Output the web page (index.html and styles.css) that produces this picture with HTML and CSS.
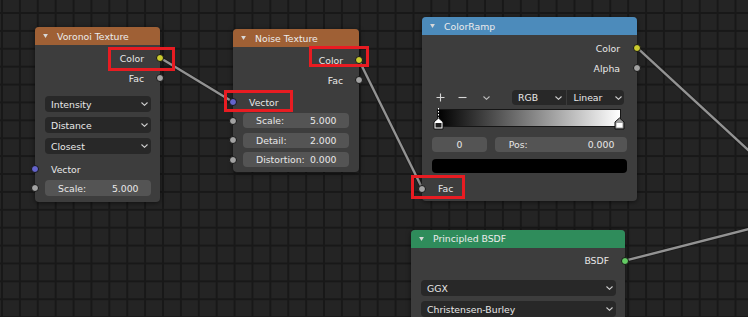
FILE: index.html
```html
<!DOCTYPE html>
<html>
<head>
<meta charset="utf-8">
<link rel="stylesheet" href="styles.css">
</head>
<body>
<div class="editor">
  <svg class="links" width="748" height="317" viewBox="0 0 748 317">
    <g class="wire-shadow">
      <line x1="160" y1="57.7" x2="233" y2="102"/>
      <line x1="359" y1="60.3" x2="422" y2="187.7"/>
      <line x1="637" y1="47.7" x2="760" y2="161"/>
      <line x1="625" y1="260.7" x2="760" y2="226.3"/>
    </g>
    <g class="wire">
      <line x1="160" y1="57.7" x2="233" y2="102"/>
      <line x1="359" y1="60.3" x2="422" y2="187.7"/>
      <line x1="637" y1="47.7" x2="760" y2="161"/>
      <line x1="625" y1="260.7" x2="760" y2="226.3"/>
    </g>
  </svg>

  <!-- Voronoi Texture -->
  <div class="node node-voronoi">
    <div class="node-header hdr-texture"><svg class="tri" viewBox="0 0 6 5"><polygon points="0,0 6,0 3,5"/></svg>Voronoi Texture</div>
    <div class="node-body body-voronoi">
      <div class="row row-out"><span>Color</span><i class="sock sock-right sock-yellow"></i></div>
      <div class="row row-out"><span>Fac</span><i class="sock sock-right sock-grey"></i></div>
      <div class="dropdown dd-first"><span>Intensity</span><svg class="chev" viewBox="0 0 7 4"><polyline points="0.5,0.5 3.5,3.3 6.5,0.5"/></svg></div>
      <div class="dropdown dd-next"><span>Distance</span><svg class="chev" viewBox="0 0 7 4"><polyline points="0.5,0.5 3.5,3.3 6.5,0.5"/></svg></div>
      <div class="dropdown dd-next"><span>Closest</span><svg class="chev" viewBox="0 0 7 4"><polyline points="0.5,0.5 3.5,3.3 6.5,0.5"/></svg></div>
      <div class="row row-in vor-vector"><i class="sock sock-left sock-blue"></i><span>Vector</span></div>
      <div class="field field-vor-scale"><i class="sock sock-left-field sock-grey"></i><span>Scale:</span><span>5.000</span></div>
    </div>
  </div>

  <!-- Noise Texture -->
  <div class="node node-noise">
    <div class="node-header hdr-texture"><svg class="tri" viewBox="0 0 6 5"><polygon points="0,0 6,0 3,5"/></svg>Noise Texture</div>
    <div class="node-body body-noise">
      <div class="row row-out"><span>Color</span><i class="sock sock-right sock-yellow"></i></div>
      <div class="row row-out"><span>Fac</span><i class="sock sock-right sock-grey"></i></div>
      <div class="row row-in noise-vector"><i class="sock sock-left sock-blue"></i><span>Vector</span></div>
      <div class="field field-noise first"><i class="sock sock-left-field sock-grey"></i><span>Scale:</span><span>5.000</span></div>
      <div class="field field-noise"><i class="sock sock-left-field sock-grey"></i><span>Detail:</span><span>2.000</span></div>
      <div class="field field-noise"><i class="sock sock-left-field sock-grey"></i><span>Distortion:</span><span>0.000</span></div>
    </div>
  </div>

  <!-- ColorRamp -->
  <div class="node node-ramp">
    <div class="node-header hdr-converter"><svg class="tri" viewBox="0 0 6 5"><polygon points="0,0 6,0 3,5"/></svg>ColorRamp</div>
    <div class="node-body body-ramp">
      <div class="row row-out ramp-out"><span>Color</span><i class="sock sock-right sock-yellow"></i></div>
      <div class="row row-out ramp-out"><span>Alpha</span><i class="sock sock-right sock-grey"></i></div>
      <div class="ramp-tools">
        <svg class="tool tool-plus" viewBox="0 0 9 9"><path d="M4.5 0.5V8.5M0.5 4.5H8.5"/></svg>
        <svg class="tool tool-minus" viewBox="0 0 9 9"><path d="M0.5 4.5H8.5"/></svg>
        <svg class="tool tool-chev" viewBox="0 0 7 4"><polyline points="0.5,0.5 3.5,3.3 6.5,0.5"/></svg>
        <div class="split-dd">
          <div class="split-part part-rgb"><span>RGB</span><svg class="chev" viewBox="0 0 7 4"><polyline points="0.5,0.5 3.5,3.3 6.5,0.5"/></svg></div>
          <div class="split-part part-linear"><span>Linear</span><svg class="chev" viewBox="0 0 7 4"><polyline points="0.5,0.5 3.5,3.3 6.5,0.5"/></svg></div>
        </div>
      </div>
      <div class="ramp-bar">
        <div class="ramp-grad"></div>
        <svg class="stop stop-left" viewBox="0 0 11 13"><path class="stop-dash" d="M5.5 -9V2"/><path class="stop-shape" d="M1 5L5.5 1L10 5V12H1Z"/><rect class="stop-fill-dark" x="2.5" y="6" width="6" height="4.5"/></svg>
        <svg class="stop stop-right" viewBox="0 0 11 13"><path class="stop-shape-r" d="M1 5L5.5 1L10 5V12H1Z"/><rect class="stop-fill-light" x="2.5" y="6" width="6" height="4.5"/></svg>
      </div>
      <div class="ramp-fields">
        <div class="field field-index"><span>0</span></div>
        <div class="field field-pos"><span>Pos:</span><span>0.000</span></div>
      </div>
      <div class="ramp-color"></div>
      <div class="row row-in ramp-fac"><i class="sock sock-left sock-grey"></i><span>Fac</span></div>
    </div>
  </div>

  <!-- Principled BSDF -->
  <div class="node node-bsdf">
    <div class="node-header hdr-shader"><svg class="tri" viewBox="0 0 6 5"><polygon points="0,0 6,0 3,5"/></svg>Principled BSDF</div>
    <div class="node-body body-bsdf">
      <div class="row row-out"><span>BSDF</span><i class="sock sock-right sock-green"></i></div>
      <div class="dropdown dd-bsdf-first"><span>GGX</span><svg class="chev" viewBox="0 0 7 4"><polyline points="0.5,0.5 3.5,3.3 6.5,0.5"/></svg></div>
      <div class="dropdown dd-next"><span>Christensen-Burley</span><svg class="chev" viewBox="0 0 7 4"><polyline points="0.5,0.5 3.5,3.3 6.5,0.5"/></svg></div>
    </div>
  </div>

  <!-- highlight boxes -->
  <div class="mark mark-vor-color"></div>
  <div class="mark mark-noise-color"></div>
  <div class="mark mark-noise-vector"></div>
  <div class="mark mark-ramp-fac"></div>
</div>
</body>
</html>
```

FILE: styles.css
```css
* { box-sizing: border-box; }

html, body {
  margin: 0;
  padding: 0;
  background: #232323;
}

.editor {
  position: relative;
  width: 748px;
  height: 317px;
  overflow: hidden;
  background-color: #242424;
  background-image:
    linear-gradient(to right, #181818 0, #181818 1.5px, transparent 1.5px),
    linear-gradient(to bottom, #181818 0, #181818 1.5px, transparent 1.5px);
  background-size: 17.9px 17.9px;
  background-position: 1px 12px;
  font-family: "DejaVu Sans", "Liberation Sans", sans-serif;
  font-size: 9.3px;
  color: #e8e8e8;
}

/* links */
.links {
  position: absolute;
  left: 0;
  top: 0;
}
.wire-shadow line {
  stroke: #151515;
  stroke-width: 4.2;
  stroke-opacity: 0.55;
}
.wire line {
  stroke: #939393;
  stroke-width: 2.4;
}

/* nodes */
.node {
  position: absolute;
  background: #3d3d3d;
  border-radius: 4px;
  box-shadow: 0 1px 5px rgba(0, 0, 0, 0.55);
}
.node-voronoi { left: 35px; top: 27px; width: 125px; }
.node-noise   { left: 233px; top: 29px; width: 126px; }
.node-ramp    { left: 422px; top: 17px; width: 215px; }
.node-bsdf    { left: 411px; top: 230px; width: 214px; height: 130px; }

.node-header {
  height: 18px;
  border-radius: 4px 4px 0 0;
  display: flex;
  align-items: center;
  padding-left: 22px;
  position: relative;
  color: #ececec;
  white-space: nowrap;
}
.hdr-texture   { background: #9f6035; }
.hdr-converter { background: #4c8bbb; }
.hdr-shader    { background: #2f8c5b; height: 17.5px; }

.tri {
  position: absolute;
  left: 8px;
  top: 7px;
  width: 5px;
  height: 4px;
  fill: #d8d8d8;
}

.node-body {
  display: flex;
  flex-direction: column;
  padding-top: 3px;
}
.body-voronoi { padding-bottom: 6px; }
.body-noise   { padding-bottom: 5px; }
.body-ramp    { padding-bottom: 2px; }

/* socket rows */
.row {
  position: relative;
  height: 20px;
  display: flex;
  align-items: center;
  white-space: nowrap;
}
.row-out {
  justify-content: flex-end;
  padding-right: 16px;
}
.ramp-out { padding-right: 17px; }
.row-in {
  padding-left: 16px;
}

.sock {
  position: absolute;
  width: 8px;
  height: 8px;
  border-radius: 50%;
  border: 1px solid #161616;
  top: 50%;
  margin-top: -4px;
}
.sock-right { right: -4px; }
.sock-left  { left: -4px; }
.sock-left-field { left: -14px; }
.sock-yellow { background: #cccc2e; }
.sock-grey   { background: #a3a3a3; }
.sock-blue   { background: #6464cc; }
.sock-green  { background: #64cc64; }

/* dropdowns */
.dropdown {
  height: 16px;
  margin: 0 9px 0 10px;
  background: #282828;
  border-radius: 4px;
  display: flex;
  align-items: center;
  justify-content: space-between;
  padding: 0 3px 0 6px;
  white-space: nowrap;
}
.dd-first { margin-top: 8px; }
.dd-next  { margin-top: 5px; }
.dd-bsdf-first { margin-top: 9.5px; }

.chev {
  width: 7px;
  height: 4px;
  fill: none;
  stroke: #d0d0d0;
  stroke-width: 1.1;
}

.vor-vector { margin-top: 5px; }
.noise-vector { margin-top: 2px; }

/* number fields */
.field {
  position: relative;
  height: 16px;
  margin: 0 9px 0 10px;
  background: #545454;
  border-radius: 4px;
  display: flex;
  align-items: center;
  justify-content: space-between;
  padding: 0 12.5px 0 13px;
  white-space: nowrap;
}
.field-vor-scale { margin-top: 1px; }
.field-noise {
  height: 15px;
  margin: 4.5px 10px 0 10px;
}
.field-noise.first { margin-top: 1px; }

/* color ramp */
.ramp-tools {
  height: 15px;
  margin-top: 12px;
  display: flex;
  align-items: center;
}
.tool {
  fill: none;
  stroke: #d6d6d6;
  stroke-width: 1.1;
}
.tool-plus  { width: 9px; height: 9px; margin-left: 13.5px; }
.tool-minus { width: 9px; height: 9px; margin-left: 13.5px; }
.tool-chev  { width: 7px; height: 4px; margin-left: 15.5px; stroke: #bdbdbd; }

.split-dd {
  margin-left: 22px;
  width: 112.5px;
  height: 15px;
  display: flex;
  background: #282828;
  border-radius: 4px;
}
.split-part {
  display: flex;
  align-items: center;
  justify-content: space-between;
}
.part-rgb {
  width: 55.5px;
  padding: 0 4px 0 6.5px;
  border-right: 1px solid #3a3a3a;
}
.part-linear {
  flex: 1;
  padding: 0 2px 0 6.5px;
}

.ramp-bar {
  position: relative;
  height: 18px;
  margin: 4px 16.3px 0 15.3px;
}
.ramp-grad {
  height: 100%;
  border: 1px solid #161616;
  background: linear-gradient(to right, #000 0%, #ffffff 100%);
}
.stop {
  position: absolute;
  width: 11px;
  height: 13px;
  top: 8px;
  overflow: visible;
}
.stop-left  { left: -4.5px; }
.stop-right { right: -4.5px; }
.stop-shape {
  fill: #ffffff;
  stroke: #111;
  stroke-width: 1;
}
.stop-shape-r {
  fill: #9a9a9a;
  stroke: #111;
  stroke-width: 1;
}
.stop-fill-dark { fill: #1e1e1e; }
.stop-fill-light { fill: #ffffff; }
.stop-dash {
  stroke: #ffffff;
  stroke-width: 1;
  stroke-dasharray: 1.5 1.5;
}

.ramp-fields {
  display: flex;
  gap: 8px;
  margin: 9.5px 10px 0 10px;
}
.ramp-fields .field {
  margin: 0;
  height: 15px;
}
.field-index {
  width: 55px;
  justify-content: center;
  padding: 0;
}
.field-pos {
  flex: 1;
  padding: 0 12.7px 0 13.7px;
}

.ramp-color {
  height: 14.5px;
  margin: 7px 10px 0 10px;
  background: #000;
  border-radius: 4px;
}
.ramp-fac { margin-top: 5.5px; }

/* highlight marks */
.mark {
  position: absolute;
  border: 3.3px solid #e81c22;
}
.mark-vor-color    { left: 108px; top: 46.5px; width: 67px; height: 24px; }
.mark-noise-color  { left: 308.5px; top: 46.3px; width: 60px; height: 21px; }
.mark-noise-vector { left: 224.3px; top: 90.3px; width: 69px; height: 21.4px; }
.mark-ramp-fac     { left: 411.3px; top: 175px; width: 53.7px; height: 24.3px; }
```
